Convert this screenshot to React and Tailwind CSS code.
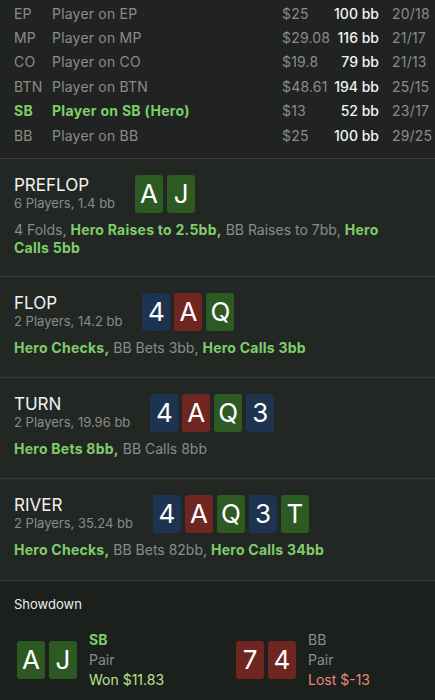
import React from 'react';

const players = [
    { pos: 'EP', name: 'Player on EP', stack: '$25', bb: '100 bb', stat: '20/18' },
    { pos: 'MP', name: 'Player on MP', stack: '$29.08', bb: '116 bb', stat: '21/17' },
    { pos: 'CO', name: 'Player on CO', stack: '$19.8', bb: '79 bb', stat: '21/13' },
    { pos: 'BTN', name: 'Player on BTN', stack: '$48.61', bb: '194 bb', stat: '25/15' },
    { pos: 'SB', name: 'Player on SB (Hero)', stack: '$13', bb: '52 bb', stat: '23/17', hero: true },
    { pos: 'BB', name: 'Player on BB', stack: '$25', bb: '100 bb', stat: '29/25' },
];

const suitBg = {
    g: 'bg-[#2d5a23]',
    r: 'bg-[#6f2621]',
    b: 'bg-[#1d3350]',
};

const streets = [
    {
        title: 'PREFLOP',
        sub: '6 Players, 1.4 bb',
        cards: [['A', 'g'], ['J', 'g']],
        actions: [
            ['4 Folds,', false],
            ['Hero Raises to 2.5bb,', true],
            ['BB Raises to 7bb,', false],
            ['Hero', true],
            ['Calls 5bb', true],
        ],
    },
    {
        title: 'FLOP',
        sub: '2 Players, 14.2 bb',
        cards: [['4', 'b'], ['A', 'r'], ['Q', 'g']],
        actions: [
            ['Hero Checks,', true],
            ['BB Bets 3bb,', false],
            ['Hero Calls 3bb', true],
        ],
    },
    {
        title: 'TURN',
        sub: '2 Players, 19.96 bb',
        cards: [['4', 'b'], ['A', 'r'], ['Q', 'g'], ['3', 'b']],
        actions: [
            ['Hero Bets 8bb,', true],
            ['BB Calls 8bb', false],
        ],
    },
    {
        title: 'RIVER',
        sub: '2 Players, 35.24 bb',
        cards: [['4', 'b'], ['A', 'r'], ['Q', 'g'], ['3', 'b'], ['T', 'g']],
        actions: [
            ['Hero Checks,', true],
            ['BB Bets 82bb,', false],
            ['Hero Calls 34bb', true],
        ],
    },
];

const Card = ({ rank, suit }) => (
    <div
        className={`${suitBg[suit]} w-[28px] h-[38px] rounded-[3px] flex items-center justify-center text-white text-[26px] leading-none`}
    >
        {rank}
    </div>
);

const App = () => {
    return (
        <div
            className="w-[435px] h-[700px] overflow-hidden bg-[#232724] text-[14px]"
            style={{ fontFamily: 'Inter, "Noto Sans", sans-serif' }}
        >
            {/* players table */}
            <div className="pt-[1px] pb-[11px] pl-[14px] pr-[7px] border-b border-[#393d3a] bg-[#202321]">
                {players.map((p) => (
                    <div
                        key={p.pos}
                        className={`flex items-center h-[24.4px] whitespace-nowrap ${
                            p.hero ? 'text-[#7fcd69] font-bold tracking-[0.3px]' : 'text-[#8a8c8a] tracking-[0.2px]'
                        }`}
                    >
                        <span className="w-[38px]">{p.pos}</span>
                        <span className="flex-1">{p.name}</span>
                        <span className="w-[45px] text-[#8a8c8a] font-normal tracking-[0.2px]">{p.stack}</span>
                        <span className="w-[52px] text-right text-[#f2f2f2] font-medium tracking-normal">{p.bb}</span>
                        <span className="ml-[13px] w-[36px] text-[#8a8c8a] font-normal">{p.stat}</span>
                    </div>
                ))}
            </div>

            {streets.map((s, idx) => (
                <div
                    key={s.title}
                    className={`pt-[16px] pl-[14px] pr-[14px] border-b border-[#393d3a] ${
                        idx === 0 ? 'pb-[19px]' : idx === 3 ? 'pb-[21px]' : 'pb-[20px]'
                    }`}
                >
                    <div className="flex items-center gap-5">
                        <div className="flex flex-col">
                            <span className="text-[17px] leading-[19px] text-[#f2f2f2]">{s.title}</span>
                            <span className="text-[13px] leading-[17px] text-[#8a8c8a]">{s.sub}</span>
                        </div>
                        <div className="flex gap-1">
                            {s.cards.map(([r, c], i) => (
                                <Card key={i} rank={r} suit={c} />
                            ))}
                        </div>
                    </div>
                    <p className="mt-2 pr-[20px] leading-[18px] text-[#8a8c8a]">
                        {s.actions.map(([t, hero], i) => (
                            <React.Fragment key={i}>
                                {i > 0 && ' '}
                                <span className={hero ? 'text-[#7fcd69] font-bold tracking-[0.25px]' : ''}>{t}</span>
                            </React.Fragment>
                        ))}
                    </p>
                </div>
            ))}

            {/* showdown */}
            <div className="bg-[#1c201d] h-full pt-[14px] pl-[14px]">
                <div className="text-[13px] text-[#ececec]">Showdown</div>
                <div className="grid grid-cols-[219px_1fr] mt-[15px] pl-[3px]">
                    <div className="flex gap-3 items-start">
                        <div className="flex gap-1 mt-[11px]">
                            <Card rank="A" suit="g" />
                            <Card rank="J" suit="g" />
                        </div>
                        <div className="flex flex-col leading-[20px]">
                            <span className="text-[#7fcd69] font-bold">SB</span>
                            <span className="text-[#8a8c8a]">Pair</span>
                            <span className="text-[#b9e38c]">Won $11.83</span>
                        </div>
                    </div>
                    <div className="flex gap-3 items-start">
                        <div className="flex gap-1 mt-[11px]">
                            <Card rank="7" suit="r" />
                            <Card rank="4" suit="r" />
                        </div>
                        <div className="flex flex-col leading-[20px]">
                            <span className="text-[#8a8c8a]">BB</span>
                            <span className="text-[#8a8c8a]">Pair</span>
                            <span className="text-[#ea8778]">Lost $-13</span>
                        </div>
                    </div>
                </div>
            </div>
        </div>
    );
};

export default App;
